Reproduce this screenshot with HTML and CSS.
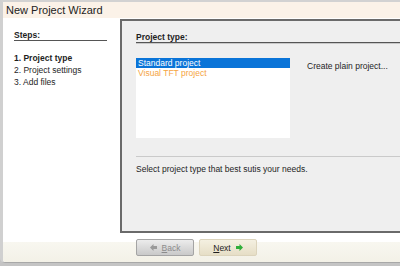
FILE: index.html
```html
<!DOCTYPE html>
<html lang="en">
<head>
    <meta charset="UTF-8">
    <title>New Project Wizard</title>
    <link rel="stylesheet" href="styles.css">
</head>
<body>
    <div class="window">
        <div class="titlebar">New Project Wizard</div>
        <div class="body">
            <div class="steps">
                <div class="heading steps-heading">Steps:</div>
                <ul class="step-list">
                    <li class="current">1. Project type</li>
                    <li>2. Project settings</li>
                    <li>3. Add files</li>
                </ul>
            </div>
            <div class="panel">
                <div class="heading panel-heading">Project type:</div>
                <div class="chooser">
                    <ul class="listbox">
                        <li class="selected">Standard project</li>
                        <li class="tft">Visual TFT project</li>
                    </ul>
                    <div class="description">Create plain project...</div>
                </div>
                <div class="hint">Select project type that best sutis your needs.</div>
            </div>
        </div>
        <div class="footer">
            <button class="button back" disabled>
                <svg width="7" height="7" viewBox="0 0 7 7"><path d="M0 3.5 L3.5 0 V2 H7 V5 H3.5 V7 Z" fill="#9a9a9a"/></svg>
                <span><u>B</u>ack</span>
            </button>
            <button class="button next">
                <span><u>N</u>ext</span>
                <svg width="7" height="7" viewBox="0 0 7 7"><path d="M7 3.5 L3.5 0 V2 H0 V5 H3.5 V7 Z" fill="#2fae3a"/></svg>
            </button>
        </div>
    </div>
</body>
</html>
```

FILE: styles.css
```css
html, body {
    margin: 0;
    overflow: hidden;
}
body {
    background-color: #c4c4c4;
    font-family: "Liberation Sans", Arial, sans-serif;
    font-size: 8.5px;
    color: #1e1e1e;
    height: 266px;
}
.window {
    width: 400px;
    height: 263px;
    box-sizing: border-box;
    background-color: #fff;
    border-top: 2px solid #d2d2d2;
    border-left: 3px solid #d0d0d0;
    border-bottom: 1px solid #a8a8a8;
    border-bottom-left-radius: 5px;
    display: flex;
    flex-direction: column;
    overflow: hidden;
}
.titlebar {
    height: 16px;
    line-height: 16px;
    background-color: #fbf2e8;
    font-size: 11px;
    color: #222;
    padding-left: 3px;
    border-bottom: 1px solid #fff;
}
.body {
    display: flex;
    height: 214px;
}
.steps {
    width: 117px;
    padding: 11px 0 0 11px;
    box-sizing: border-box;
}
.heading {
    font-weight: bold;
    height: 10px;
    line-height: 10px;
}
.steps-heading {
    width: 93px;
    border-bottom: 1px solid #555;
}
.step-list {
    list-style: none;
    margin: 11px 0 0;
    padding: 0;
}
.step-list li {
    height: 12px;
    line-height: 12px;
}
.step-list .current {
    font-weight: bold;
}
.panel {
    flex: 1;
    background-color: #efefef;
    border: 2px solid #6a6a6a;
    border-right: none;
    padding: 11px 0 0 14px;
    display: flex;
    flex-direction: column;
}
.panel-heading {
    border-bottom: 1px solid #555;
    box-shadow: 0 1px 0 #c8c8c8;
}
.chooser {
    display: flex;
    margin-top: 15px;
    gap: 17px;
}
.listbox {
    list-style: none;
    margin: 0;
    padding: 0;
    width: 154px;
    height: 80px;
    background-color: #fff;
}
.listbox li {
    height: 10px;
    line-height: 10px;
    padding-left: 2px;
}
.listbox .selected {
    background-color: #0a74d8;
    color: #fff;
}
.listbox .tft {
    color: #f5a443;
}
.description {
    margin-top: 3px;
    line-height: 10px;
}
.hint {
    margin-top: 18px;
    border-top: 1px solid #cacaca;
    padding-top: 7px;
    line-height: 10px;
}
.footer {
    flex: 1;
    background: linear-gradient(#fff 0, #fff 9px, #f8f7f0 9px, #f3f1e7 100%);
    display: flex;
    align-items: flex-start;
    gap: 5px;
    padding: 6px 0 0 133px;
}
.button {
    width: 58px;
    height: 17px;
    display: flex;
    align-items: center;
    justify-content: center;
    gap: 5px;
    font-family: "Liberation Sans", Arial, sans-serif;
    font-size: 8.5px;
    padding: 0;
    border-radius: 2px;
    cursor: pointer;
}
.back {
    background: linear-gradient(#ececec, #c9c9c9);
    border: 1px solid #a4a4a4;
    color: #8c8c8c;
}
.next {
    background: linear-gradient(#f4f0e1, #e6dec6);
    border: 1px solid #dcd4bc;
    color: #1e1e1e;
}
```
